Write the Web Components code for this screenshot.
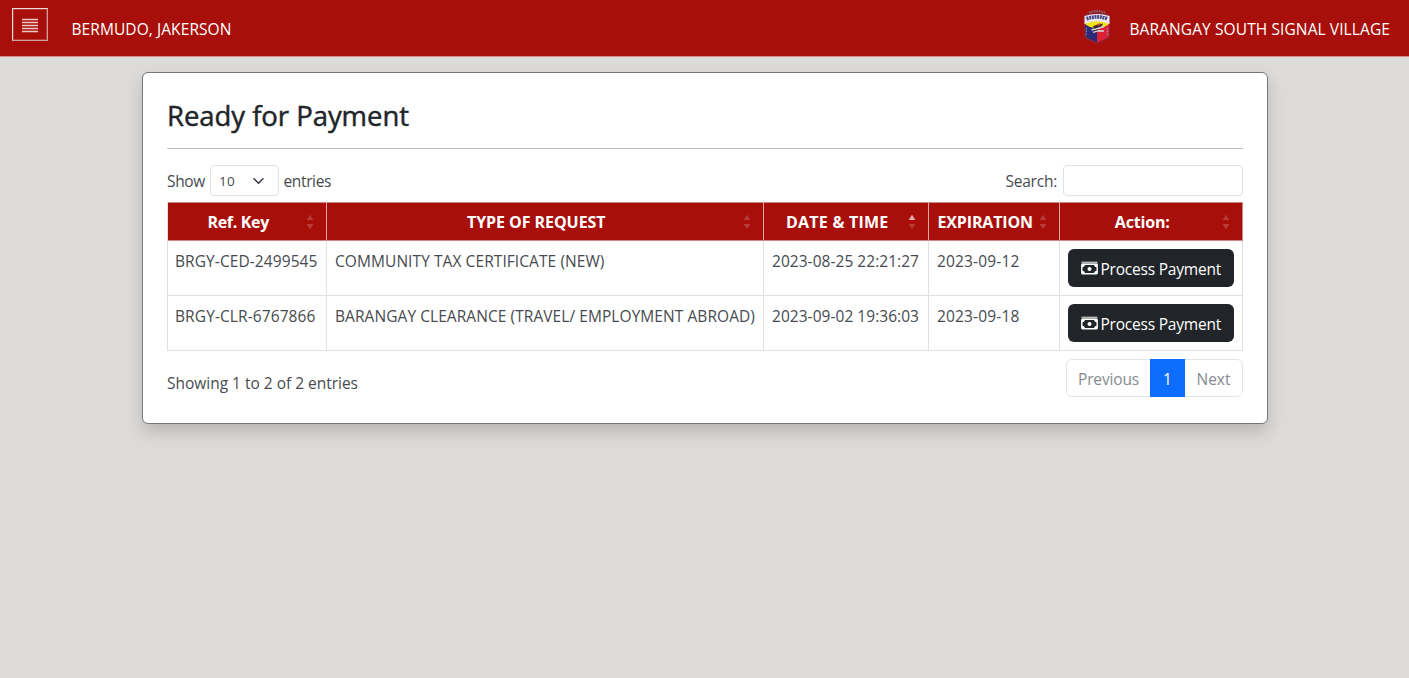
<!DOCTYPE html>
<html lang="en">
<head>
<meta charset="utf-8">
<title>Ready for Payment</title>
<style>
html,body{margin:0;height:100%}
body{background:#dcdbd9;font:15.5px/24px "Open Sans","Noto Sans",sans-serif;color:#474b4f;overflow:hidden}
</style>
</head>
<body>
<app-bar user="BERMUDO, JAKERSON" place="BARANGAY SOUTH SIGNAL VILLAGE"></app-bar>
<payment-card>
  <fit-text slot="title" w="242">Ready for Payment</fit-text>
  <table-tools></table-tools>
  <request-table></request-table>
  <table-footer></table-footer>
</payment-card>
<script>
/* One line of text, tracked so that it fills the width w. */
class FitText extends HTMLElement{
  connectedCallback(){
    if(this.shadowRoot)return;
    this.attachShadow({mode:'open'}).innerHTML=`<style>:host{display:inline-block;white-space:pre;flex:none}span{display:inline-block}</style><span><slot></slot></span>`;
    requestAnimationFrame(()=>this.fit());
    this.fit();
  }
  fit(){
    const w=+this.getAttribute('w'),s=this.shadowRoot.querySelector('span'),n=this.textContent.length;
    if(!w||!n)return;
    this.style.width=w+'px';
    s.style.letterSpacing='0px';
    const nat=s.getBoundingClientRect().width;
    if(nat)s.style.letterSpacing=((w-nat)/n)+'px';
  }
}

class SealLogo extends HTMLElement{
  constructor(){super();this.attachShadow({mode:'open'}).innerHTML=`<style>:host{display:block;width:28px;height:36px}svg{display:block}</style>
<svg width="28" height="36" viewBox="0 0 28 36">
<path d="M1 6.500 7 2Q14-.5 21 2l6 4.500V27q0 2-3 3.500L14 35 4 30.500Q1 29 1 27Z" fill="#8f2430"/>
<path d="M6 3.400Q14 .6 22 3.400" fill="none" stroke="#a06668" stroke-width="1.500" stroke-dasharray="1.500 1"/>
<path d="M2 14 14 17V33.500L4.500 29Q2.500 28 2.500 26Z" fill="#2d2b78"/>
<path d="M26 14 14 17V33.500L23.500 29Q25.500 28 25.500 26Z" fill="#dd2038"/>
<path d="M1.500 14.500Q14 8 26.500 14.500 23 18.500 14 19.500 5 18.500 1.500 14.500Z" fill="#f2e21c"/>
<path d="M1.500 7Q14 3 26.500 7V15Q14 9.500 1.500 15Z" fill="#e9e6f0"/>
<path d="M3.500 9.800Q14 6 24.500 9.800" fill="none" stroke="#4a4783" stroke-width="3.600" stroke-dasharray="2 .7"/>
<path d="M10 17 14 16 20 14.500 18.500 17.500 15 19.500 11 19.500Z" fill="#39262d"/>
<path d="M13 15.500 18 14 16 17Z" fill="#e04a27"/>
<path d="M8.500 21 13 20 21 17.500M10 23.300 15 21.800 21 22" fill="none" stroke="#dcd5d8" stroke-width="1.500"/>
<path d="M10 22.200 15 20.800" stroke="#201c33" stroke-width=".8"/>
<path d="M3.300 19V27M24.700 19V27" stroke="#a6a0b5" stroke-width=".9" stroke-dasharray="1.500 1"/>
</svg>`}
}

class AppBar extends HTMLElement{
  connectedCallback(){
    this.attachShadow({mode:'open'}).innerHTML=`<style>
:host{display:flex;box-sizing:border-box;height:57px;background:#a90f0a;border-bottom:1px solid #d68d8a;color:#fff;padding:0 19px 0 12px;align-items:flex-start}
button{box-sizing:border-box;width:36px;height:33px;margin:8px 23.500px 0 0;padding:0;border:1px solid;border-color:#f1dada #cfa09e #cfa09e #f1dada;outline:1px solid #d47f7c66;outline-offset:-2px;background:none;display:grid;place-items:center;flex:none}
button svg{margin-top:2px}
fit-text{margin-top:16.500px}
seal-logo{margin:9px 18.500px 0 auto}
</style><button aria-label="Menu"><svg width="16" height="15" viewBox="0 0 16 15"><path d="M0 1.500H16M0 4.500H16M0 7.500H16M0 10.500H16M0 13.500H16" stroke="#eec6c4" stroke-width="1.300"/></svg></button>
<fit-text w="160">${this.getAttribute('user')}</fit-text><seal-logo></seal-logo><fit-text w="260.500">${this.getAttribute('place')}</fit-text>`;
  }
}

class PaymentCard extends HTMLElement{
  constructor(){super();this.attachShadow({mode:'open'}).innerHTML=`<style>
:host{display:block;box-sizing:border-box;width:1126px;height:352px;margin:15px 0 0 142px;padding:23px 24px 24px;background:#fff;border:1px solid #75777a;border-radius:6px;box-shadow:0 8px 16px rgba(0,0,0,.16)}
h3{margin:0;height:52px;border-bottom:1px solid #bfc0c1;font-size:27.500px;font-weight:500;line-height:39px;color:#212529;-webkit-text-stroke:.45px #212529}
</style><h3><slot name="title"></slot></h3><slot></slot>`}
}

class TableTools extends HTMLElement{
  constructor(){super();this.attachShadow({mode:'open'}).innerHTML=`<style>
:host{display:flex;align-items:center;height:31px;margin:16px 0 6px}
.sel{box-sizing:border-box;width:69px;height:31px;border:1px solid #dfe3e7;border-radius:4px;margin:0 4.500px 0 5px;padding:0 13px 0 8px;display:flex;align-items:center;justify-content:space-between;font-size:13.500px}
.box{box-sizing:border-box;width:180px;height:31px;border:1px solid #dfe3e7;border-radius:4px;margin-left:6px}
.s{margin-left:auto}
</style><fit-text w="38">Show</fit-text><div class="sel"><fit-text w="16">10</fit-text><svg width="13" height="12" viewBox="0 0 16 16"><path d="m2 5 6 6 6-6" fill="none" stroke="#343a40" stroke-width="2" stroke-linecap="round" stroke-linejoin="round"/></svg></div><fit-text w="47.500">entries</fit-text><fit-text class="s" w="51.500">Search:</fit-text><div class="box"></div>`}
}

class SortHead extends HTMLElement{
  connectedCallback(){
    const up=this.hasAttribute('asc')?'#e3aaa8':'#b93c38';
    this.attachShadow({mode:'open'}).innerHTML=`<style>
:host{display:flex;align-items:center;justify-content:space-between;box-sizing:border-box;padding:1px 12.500px 0 8px;background:#a90f0a;color:#fff;font-weight:700;font-size:16px;border-right:1px solid #dfa8a6;border-top:1px solid #cf8885;border-bottom:1px solid #cf8885}
:host(:last-of-type){border-right-color:#cf8885}
div{flex:1;text-align:center;padding-right:5px}fit-text{vertical-align:top}svg{flex:none;margin-top:-1px}
</style><div><slot></slot></div><svg width="8" height="16" viewBox="0 0 8 16"><path d="M.7 6 4 .7 7.300 6Z" fill="${up}"/><path d="M.7 10 4 15.300 7.300 10Z" fill="#b93c38"/></svg>`;
  }
}

class PayButton extends HTMLElement{
  constructor(){super();this.attachShadow({mode:'open'}).innerHTML=`<style>
:host{display:flex;box-sizing:border-box;width:166px;height:38px;border-radius:6px;background:#212529;color:#fff;align-items:center;padding:2px 0 0 12.500px}
svg{flex:none;margin:-3px 3px 0 0}
</style><svg width="17" height="14" viewBox="0 0 17 14"><path d="M.5 1.500H16.500" stroke="#b5b7b9" stroke-width="1.800"/><rect x=".8" y="3.300" width="15.400" height="9.400" rx=".6" fill="none" stroke="#fff" stroke-width="1.400"/><path d="M1 3.500H4Q3.800 6.100 1 6.300ZM16 3.500H13Q13.200 6.100 16 6.300ZM1 12.500H4Q3.800 9.900 1 9.700ZM16 12.500H13Q13.200 9.900 16 9.700Z" fill="#fff"/><circle cx="8.500" cy="8" r="2" fill="#fff"/></svg><fit-text w="120.500">Process Payment</fit-text>`}
}

class RequestTable extends HTMLElement{
  constructor(){super();
    const rows=[[['BRGY-CED-2499545',142.5],['COMMUNITY TAX CERTIFICATE (NEW)',269.5],['2023-08-25 22:21:27',147],['2023-09-12',82.5]],
                [['BRGY-CLR-6767866',140.5],['BARANGAY CLEARANCE (TRAVEL/ EMPLOYMENT ABROAD)',420],['2023-09-02 19:36:03',147],['2023-09-18',82.5]]];
    this.attachShadow({mode:'open'}).innerHTML=`<style>
:host{display:grid;box-sizing:border-box;grid-template-columns:159px 437px 165px 131px 183px;grid-template-rows:39px 55px 55px;border-left:1px solid #dee2e6;height:149px}
.c{border-right:1px solid #dee2e6;border-bottom:1px solid #dee2e6;padding:8px 0 0 8px}
.c:nth-of-type(5n+1) fit-text{margin-left:-1px}
</style><sort-head><fit-text w="61.500">Ref. Key</fit-text></sort-head><sort-head><fit-text w="138.500">TYPE OF REQUEST</fit-text></sort-head><sort-head asc><fit-text w="102.500">DATE &amp; TIME</fit-text></sort-head><sort-head><fit-text w="95.500">EXPIRATION</fit-text></sort-head><sort-head><fit-text w="55">Action:</fit-text></sort-head>`+
    rows.map(r=>r.map(([t,w])=>`<div class="c"><fit-text w="${w}">${t}</fit-text></div>`).join('')+'<div class="c"><pay-button></pay-button></div>').join('')}
}

class TableFooter extends HTMLElement{
  constructor(){super();this.attachShadow({mode:'open'}).innerHTML=`<style>
:host{display:flex;justify-content:space-between;margin-top:8px}
.i{margin-top:12px}
nav{display:flex;box-sizing:border-box;height:38px;width:177px;border:1px solid #e3e6e9;border-radius:6px;color:#858b90;line-height:38px}
nav>*{text-align:center}.p{width:83px}.n{flex:1}
.a{width:35px;margin:-1px 0;height:38px;background:#0d6efd;color:#fff;line-height:40px}
</style><fit-text class="i" w="191">Showing 1 to 2 of 2 entries</fit-text><nav><div class="p"><fit-text w="61">Previous</fit-text></div><div class="a">1</div><div class="n"><fit-text w="34">Next</fit-text></div></nav>`}
}
for(const [n,c] of Object.entries({'fit-text':FitText,'seal-logo':SealLogo,'app-bar':AppBar,'payment-card':PaymentCard,'table-tools':TableTools,'sort-head':SortHead,'pay-button':PayButton,'request-table':RequestTable,'table-footer':TableFooter}))customElements.define(n,c);
document.querySelectorAll('payment-card>fit-text').forEach(e=>e.fit());
</script>
</body>
</html>
